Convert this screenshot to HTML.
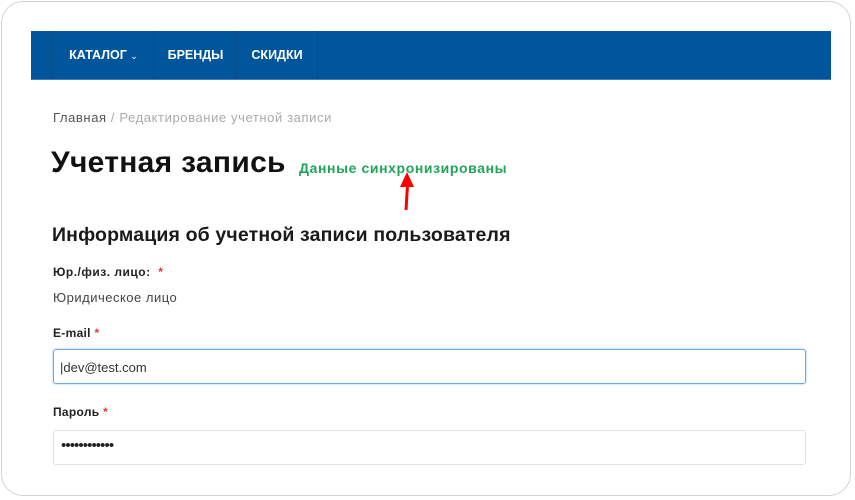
<!DOCTYPE html>
<html><head><meta charset="utf-8"><style>
body{margin:0;width:855px;height:500px;background:#fff;font-family:"Liberation Sans","DejaVu Sans",sans-serif;position:relative;overflow:hidden}
.card{position:absolute;left:1px;top:1px;width:850px;height:495px;border:1.5px solid #d4d4d4;border-radius:22px;box-sizing:border-box}
.nav{position:absolute;left:31px;top:31px;width:800px;height:48px;background:#01559a;border-bottom:1px solid #3c7fc0}
.nav div{position:absolute;top:0;height:48px;border-left:1px solid #0a4a85;color:#fff;font-weight:bold;font-size:12.5px;line-height:48px;text-align:center}
.a{position:absolute;white-space:nowrap}
.inp{position:absolute;left:53px;width:753px;height:35px;box-sizing:border-box;border-radius:3px}
</style></head><body>
<div class="card"></div>
<div class="nav">
<div style="left:21px;width:101px">КАТАЛОГ <span style="font-weight:normal;font-size:9px">&#8964;</span></div>
<div style="left:122px;width:83px">БРЕНДЫ</div>
<div style="left:205px;width:80px;border-right:1px solid #0a4a85">СКИДКИ</div>
</div>
<div class="a" style="left:53px;top:110px;font-size:13px;color:#555;letter-spacing:0.6px">Главная <span style="color:#aaa">/ Редактирование учетной записи</span></div>
<div class="a" style="left:51px;top:146px;font-size:30px;font-weight:bold;color:#111;letter-spacing:0.3px">Учетная запись</div>
<div class="a" style="left:299px;top:160px;font-size:14px;font-weight:bold;color:#1ea55a;letter-spacing:0.6px">Данные синхронизированы</div>
<svg class="a" style="left:398px;top:172px" width="18" height="40"><polygon points="9,0 2,15 16,15" fill="#f00"/><line x1="9.5" y1="13" x2="8" y2="38" stroke="#f00" stroke-width="3"/></svg>
<div class="a" style="left:52px;top:224px;font-size:19.5px;font-weight:bold;color:#1a1a1a;letter-spacing:0.15px">Информация об учетной записи пользователя</div>
<div class="a" style="left:53px;top:265px;font-size:12px;font-weight:bold;color:#222;letter-spacing:0.5px">Юр./физ. лицо: <span style="color:#e33">&nbsp;*</span></div>
<div class="a" style="left:53px;top:290px;font-size:13px;color:#444;letter-spacing:0.5px">Юридическое лицо</div>
<div class="a" style="left:53px;top:326px;font-size:12px;font-weight:bold;color:#222;letter-spacing:0.3px">E-mail <span style="color:#e33">*</span></div>
<div class="inp" style="top:349px;border:1.5px solid #70a8e0;box-shadow:0 0 2px #9cc4ee"></div>
<div class="a" style="left:60px;top:360px;font-size:13px;color:#333">|dev@test.com</div>
<div class="a" style="left:53px;top:405px;font-size:12px;font-weight:bold;color:#222;letter-spacing:0.3px">Пароль <span style="color:#e33">*</span></div>
<div class="inp" style="top:430px;border:1.5px solid #e2e2e2"></div>
<div class="a" style="left:61px;top:437px;font-size:15px;color:#222;letter-spacing:-0.9px">••••••••••••</div>
</body></html>
